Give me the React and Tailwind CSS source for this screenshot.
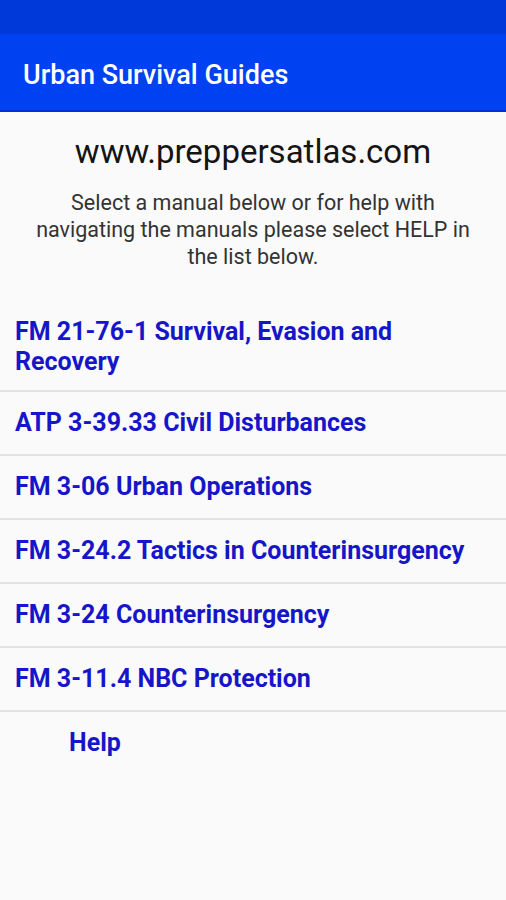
import React from "react";

const manuals = [
  "FM 21-76-1 Survival, Evasion and Recovery",
  "ATP 3-39.33 Civil Disturbances",
  "FM 3-06 Urban Operations",
  "FM 3-24.2 Tactics in Counterinsurgency",
  "FM 3-24 Counterinsurgency",
  "FM 3-11.4 NBC Protection",
];

export default function App() {
  return (
    <div className="min-h-[900px] bg-[#fafafa] font-['Roboto','Liberation_Sans',sans-serif]">
      {/* Status bar */}
      <div className="h-[34px] bg-[#0039d9]"></div>

      {/* App bar */}
      <div className="h-[78px] bg-[#0041f2] border-b-2 border-[#0030d6] flex items-center px-[23px] pt-[6px]">
        <h1 className="text-[27px] font-medium text-white">Urban Survival Guides</h1>
      </div>

      {/* Intro */}
      <div className="text-center pt-[20px] px-[20px]">
        <p className="text-[33px] leading-[40px] text-[#141414]">www.preppersatlas.com</p>
        <p className="mt-[17px] text-[21.5px] leading-[27px] text-[#333]">
          Select a manual below or for help with navigating the manuals please select HELP in the
          list below.
        </p>
      </div>

      {/* Manual list */}
      <ul className="mt-[28px]">
        {manuals.map((m, i) => (
          <li
            key={m}
            className={
              i === 0
                ? "px-[15px] pt-[19px] pb-[13px] border-b-2 border-[#e2e2e2] text-[25px] leading-[30px] font-bold text-[#1616c8]"
                : "px-[15px] py-[16px] border-b-2 border-[#e2e2e2] text-[25px] leading-[30px] font-bold text-[#1616c8]"
            }
          >
            {m}
          </li>
        ))}
        <li className="pl-[69px] py-[16px] text-[25px] leading-[30px] font-bold text-[#1616c8]">
          Help
        </li>
      </ul>
    </div>
  );
}
